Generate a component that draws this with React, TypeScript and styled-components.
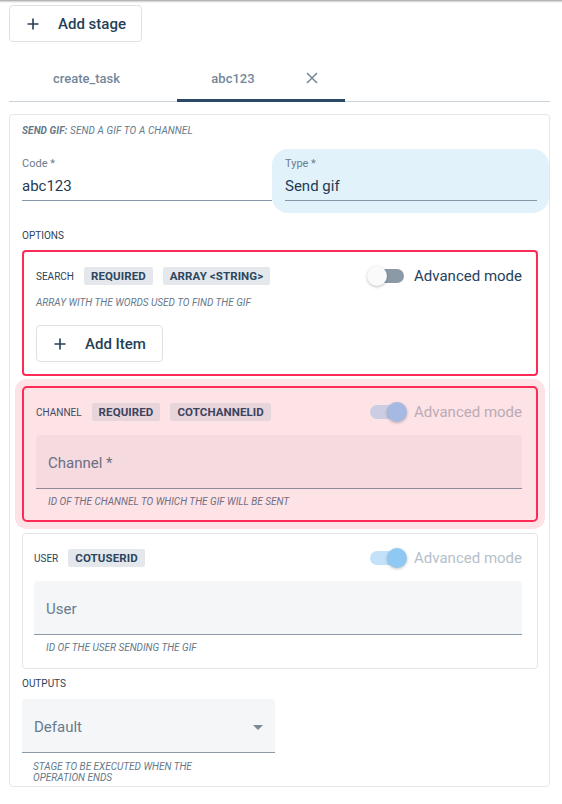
import React from 'react';
import styled, { createGlobalStyle, css } from 'styled-components';

const GlobalStyle = createGlobalStyle`
  * { box-sizing: border-box; }
  body {
    margin: 0;
    background: #ffffff;
    font-family: Roboto, "Noto Sans", Arial, sans-serif;
    color: #24415a;
  }
`;

const TopShade = styled.div`
  height: 3px;
  background: linear-gradient(#a3a3a3, #e4e4e4 60%, #ffffff);
`;

const Page = styled.div`
  padding: 2px 12px 0 9px;
`;

const OutlineButton = styled.button<{ $w: number }>`
  display: flex;
  align-items: center;
  gap: 19px;
  height: 37px;
  width: ${(p) => p.$w}px;
  padding: 0 0 0 17px;
  border: 1px solid #dde2e7;
  border-radius: 4px;
  background: #ffffff;
  font-family: Roboto, sans-serif;
  font-size: 15px;
  font-weight: 500;
  color: #243f58;
  cursor: pointer;
`;

const TabBar = styled.div`
  display: flex;
  margin-top: 10px;
  border-bottom: 1px solid #c9d1d9;
`;

const Tab = styled.div<{ $active?: boolean; $shiftL?: number; $shiftR?: number }>`
  position: relative;
  width: 168px;
  height: 49px;
  display: flex;
  align-items: center;
  justify-content: center;
  gap: 51px;
  padding: 3px ${(p) => p.$shiftR ?? 0}px 0 ${(p) => p.$shiftL ?? 0}px;
  font-size: 13px;
  font-weight: 500;
  color: #73879a;
  ${(p) =>
    p.$active &&
    css`
      &::after {
        content: '';
        position: absolute;
        left: 0;
        right: 0;
        bottom: -1px;
        height: 3px;
        background: #2b4966;
      }
    `}
`;

const Card = styled.div`
  margin-top: 12px;
  border: 1px solid #e3e7eb;
  border-radius: 4px;
  padding: 9px 11px 3px 12px;
`;

const CardTitle = styled.div`
  font-size: 10px;
  font-style: italic;
  text-transform: uppercase;
  color: #66798b;
  line-height: 13px;
  letter-spacing: 0.1px;
  b {
    font-weight: 700;
  }
`;

const FieldsRow = styled.div`
  display: grid;
  grid-template-columns: 250px 1fr;
  margin: 12px -11px 0 0;
`;

const TextField = styled.div<{ $focused?: boolean }>`
  padding: 8px 0 12px;
  ${(p) =>
    p.$focused &&
    css`
      background: #e2f2fb;
      border-radius: 16px;
      padding: 8px 12px 12px 13px;
    `}
`;

const FieldLabel = styled.div`
  font-size: 11px;
  line-height: 13px;
  color: #6a7d8e;
`;

const FieldValue = styled.div`
  margin-top: 6px;
  padding-bottom: 4px;
  font-size: 15px;
  line-height: 20px;
  color: #1f3b54;
  border-bottom: 1px solid #8799a8;
`;

const SectionLabel = styled.div<{ $top: number; $bottom: number }>`
  margin: ${(p) => p.$top}px 0 ${(p) => p.$bottom}px;
  font-size: 10px;
  line-height: 12px;
  text-transform: uppercase;
  color: #2d4259;
`;

type Tone = 'error' | 'errorFocus' | 'plain';

const ParamBox = styled.div<{ $tone: Tone; $last?: boolean }>`
  border-radius: 4px;
  margin-bottom: ${(p) => (p.$last ? 0 : 10)}px;
  ${(p) =>
    p.$tone === 'plain'
      ? css`
          border: 1px solid #e3e7eb;
          padding: 12px 15px 14px 11px;
        `
      : css`
          border: 2px solid #ff2b57;
          padding: 12px 14px 12px 12px;
        `}
  ${(p) =>
    p.$tone === 'errorFocus' &&
    css`
      background: #fde2e6;
      box-shadow: 0 0 0 7px #fde2e6;
      border-radius: 5px;
      margin-bottom: 11px;
    `}
`;

const ParamHeader = styled.div`
  display: flex;
  align-items: center;
  height: 24px;
  gap: 10px;
`;

const ParamName = styled.span<{ $muted?: boolean }>`
  font-size: 10px;
  text-transform: uppercase;
  color: ${(p) => (p.$muted ? '#444a63' : '#2d4259')};
`;

const Chip = styled.span<{ $tint?: 'pink' }>`
  display: inline-flex;
  align-items: center;
  height: 18px;
  padding: 0 7px;
  border-radius: 2px;
  font-size: 11.5px;
  font-weight: 700;
  letter-spacing: 0.1px;
  background: ${(p) => (p.$tint === 'pink' ? '#e8d5db' : '#e4e8ec')};
  color: ${(p) => (p.$tint === 'pink' ? '#3c4360' : '#2b4660')};
`;

const Advanced = styled.div`
  margin-left: auto;
  display: flex;
  align-items: center;
  gap: 10px;
`;

type SwitchTone = 'off' | 'pinkOn' | 'blueOn';

const SwitchTrack = styled.span<{ $tone: SwitchTone }>`
  position: relative;
  width: 34px;
  height: 14px;
  border-radius: 7px;
  background: ${(p) =>
    p.$tone === 'off' ? '#8c9aa7' : p.$tone === 'pinkOn' ? '#cbcde2' : '#c3e2f9'};
`;

const SwitchThumb = styled.span<{ $tone: SwitchTone }>`
  position: absolute;
  top: -3px;
  left: ${(p) => (p.$tone === 'off' ? '-3px' : '17px')};
  width: 20px;
  height: 20px;
  border-radius: 50%;
  background: ${(p) =>
    p.$tone === 'off' ? '#fafafa' : p.$tone === 'pinkOn' ? '#a5b9e2' : '#90c8f4'};
  box-shadow: 0 1px 3px rgba(0, 0, 0, 0.25);
`;

const AdvancedText = styled.span<{ $color: string }>`
  font-size: 15px;
  color: ${(p) => p.$color};
`;

const Helper = styled.div<{ $color?: string; $indent?: number; $max?: number; $top?: number }>`
  margin-top: ${(p) => p.$top ?? 0}px;
  font-size: 10px;
  line-height: 12px;
  font-style: italic;
  text-transform: uppercase;
  color: ${(p) => p.$color ?? '#66798b'};
  padding-left: ${(p) => p.$indent ?? 0}px;
  max-width: ${(p) => (p.$max ? `${p.$max}px` : 'none')};
`;

const FilledInput = styled.div<{ $bg: string; $line: string; $color: string; $w?: number }>`
  display: flex;
  align-items: center;
  justify-content: space-between;
  height: 54px;
  width: ${(p) => (p.$w ? `${p.$w}px` : 'auto')};
  padding: 3px 12px 0;
  background: ${(p) => p.$bg};
  border-bottom: 1px solid ${(p) => p.$line};
  border-radius: 4px 4px 0 0;
  font-size: 15px;
  color: ${(p) => p.$color};
`;

const InputBlock = styled.div<{ $top?: number }>`
  margin-top: ${(p) => p.$top ?? 11}px;
  display: flex;
  flex-direction: column;
  gap: 7px;
`;

const ItemButtonWrap = styled.div`
  margin-top: 16px;
`;

const OutputHelper = styled(Helper)`
  line-height: 11px;
  margin-top: 1px;
`;

const PlusIcon = ({ size = 12 }: { size?: number }) => (
  <svg width={size} height={size} viewBox="0 0 12 12" fill="none">
    <path d="M6 0.5v11M0.5 6h11" stroke="#243f58" strokeWidth="1.6" />
  </svg>
);

const CloseIcon = () => (
  <svg width="12" height="12" viewBox="0 0 12 12" fill="none">
    <path d="M1 1l10 10M11 1L1 11" stroke="#73879a" strokeWidth="1.5" />
  </svg>
);

const Caret = () => (
  <svg width="10" height="5" viewBox="0 0 10 5">
    <path d="M0 0h10L5 5z" fill="#7a8a99" />
  </svg>
);

const Toggle = ({ tone }: { tone: SwitchTone }) => (
  <SwitchTrack $tone={tone}>
    <SwitchThumb $tone={tone} />
  </SwitchTrack>
);

export default function App() {
  return (
    <>
      <GlobalStyle />
      <TopShade />
      <Page>
        <OutlineButton $w={133}>
          <PlusIcon />
          Add stage
        </OutlineButton>

        <TabBar>
          <Tab $shiftR={13}>create_task</Tab>
          <Tab $active $shiftL={7}>
            <span>abc123</span>
            <CloseIcon />
          </Tab>
        </TabBar>

        <Card>
          <CardTitle>
            <b>Send gif:</b> Send a gif to a channel
          </CardTitle>

          <FieldsRow>
            <TextField>
              <FieldLabel>Code *</FieldLabel>
              <FieldValue>abc123</FieldValue>
            </TextField>
            <TextField $focused>
              <FieldLabel>Type *</FieldLabel>
              <FieldValue>Send gif</FieldValue>
            </TextField>
          </FieldsRow>

          <SectionLabel $top={17} $bottom={8}>Options</SectionLabel>

          <ParamBox $tone="error">
            <ParamHeader>
              <ParamName>Search</ParamName>
              <Chip>REQUIRED</Chip>
              <Chip>ARRAY &lt;STRING&gt;</Chip>
              <Advanced>
                <Toggle tone="off" />
                <AdvancedText $color="#26425c">Advanced mode</AdvancedText>
              </Advanced>
            </ParamHeader>
            <Helper $top={9}>Array with the words used to find the gif</Helper>
            <ItemButtonWrap>
              <OutlineButton $w={127}>
                <PlusIcon />
                Add Item
              </OutlineButton>
            </ItemButtonWrap>
          </ParamBox>

          <ParamBox $tone="errorFocus">
            <ParamHeader>
              <ParamName $muted>Channel</ParamName>
              <Chip $tint="pink">REQUIRED</Chip>
              <Chip $tint="pink">COTCHANNELID</Chip>
              <Advanced>
                <Toggle tone="pinkOn" />
                <AdvancedText $color="#baabb5">Advanced mode</AdvancedText>
              </Advanced>
            </ParamHeader>
            <InputBlock>
              <FilledInput $bg="#f5dbe0" $line="#8f8b9b" $color="#6e6e80">
                Channel *
              </FilledInput>
              <Helper $color="#6f6f82" $indent={12}>
                Id of the channel to which the gif will be sent
              </Helper>
            </InputBlock>
          </ParamBox>

          <ParamBox $tone="plain" $last>
            <ParamHeader>
              <ParamName>User</ParamName>
              <Chip>COTUSERID</Chip>
              <Advanced>
                <Toggle tone="blueOn" />
                <AdvancedText $color="#b6c0ca">Advanced mode</AdvancedText>
              </Advanced>
            </ParamHeader>
            <InputBlock>
              <FilledInput $bg="#f4f6f8" $line="#8a9aa8" $color="#697c8d">
                User
              </FilledInput>
              <Helper $indent={12}>Id of the user sending the gif</Helper>
            </InputBlock>
          </ParamBox>

          <SectionLabel $top={9} $bottom={9}>Outputs</SectionLabel>
          <InputBlock $top={0}>
            <FilledInput $bg="#f4f6f8" $line="#8a9aa8" $color="#697c8d" $w={253}>
              Default
              <Caret />
            </FilledInput>
            <OutputHelper $indent={11} $max={210}>
              Stage to be executed when the operation ends
            </OutputHelper>
          </InputBlock>
        </Card>
      </Page>
    </>
  );
}
